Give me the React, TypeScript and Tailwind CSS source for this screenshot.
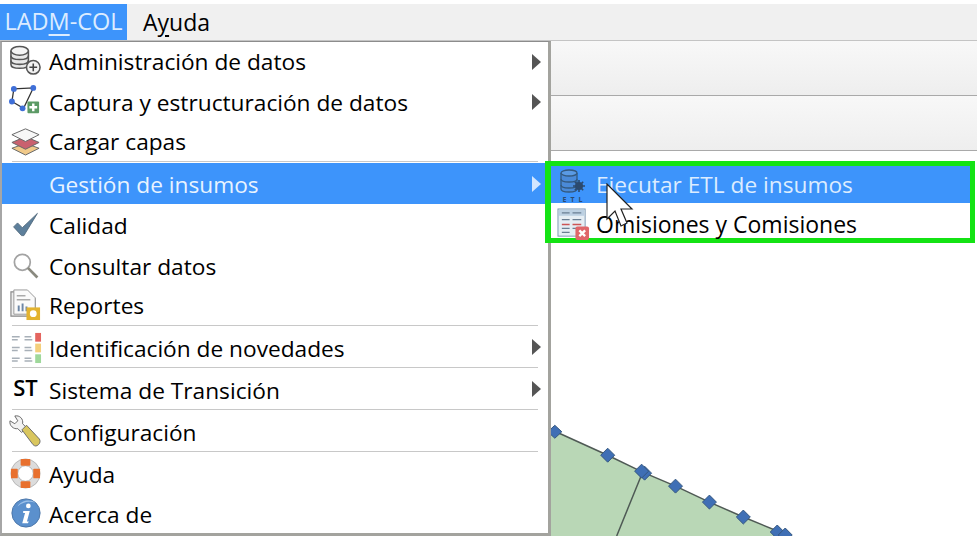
import React from 'react';

const DbAdd = () => (
  <svg width="33" height="33" viewBox="0 0 34 34" fill="none">
    <g stroke="#555" strokeWidth="1.600" fill="#fff">
      <path d="M2 7v14c0 2.500 4 4 9 4s9-1.500 9-4V7" fill="#e8e8e8" />
      <ellipse cx="11" cy="7" rx="9" ry="4.500" fill="#f4f4f4" />
      <path d="M2 12c0 2.500 4 4 9 4s9-1.500 9-4M2 17c0 2.500 4 4 9 4s9-1.500 9-4" fill="none" />
      <circle cx="25" cy="24" r="7" fill="#f2f2f2" />
    </g>
    <path d="M21 24h8M25 20v8" stroke="#444" strokeWidth="1.600" />
  </svg>
);

const PolyAdd = () => (
  <svg width="33" height="33" viewBox="0 0 34 34" fill="none">
    <path d="M5 4L25 3 15 24 3 17Z" stroke="#333" strokeWidth="1.300" />
    <g fill="#3f6fd8">
      <circle cx="5" cy="4" r="3" />
      <circle cx="25" cy="3" r="3" />
      <circle cx="14" cy="24" r="3" />
      <circle cx="3" cy="17" r="3" />
    </g>
    <rect x="19" y="17" width="12" height="12" rx="1" fill="#5c9a66" />
    <path d="M25 19v8M21 23h8" stroke="#fff" strokeWidth="2.500" />
  </svg>
);

const Layers = () => (
  <svg width="33" height="33" viewBox="0 0 34 34">
    <path d="M17 20l14 5-14 7-14-7z" fill="#f0c98a" stroke="#666" />
    <path d="M17 13l14 6-14 7-14-7z" fill="#c9616f" stroke="#666" />
    <path d="M17 5l14 6-14 7-14-7z" fill="#f7f7f7" stroke="#666" />
  </svg>
);

const Check = () => (
  <svg width="27" height="27" viewBox="0 0 34 34">
    <path d="M2 20l5-5 6 6L32 3 15 31h-3z" fill="#5d7f9b" stroke="#4a6275" strokeWidth="1" />
  </svg>
);

const Search = () => (
  <svg width="27" height="27" viewBox="0 0 34 34" fill="none">
    <circle cx="13" cy="13" r="10" stroke="#a3a3a3" strokeWidth="2.200" />
    <path d="M20 20l12 12" stroke="#8a8a80" strokeWidth="3.500" />
  </svg>
);

const Report = () => (
  <svg width="33" height="33" viewBox="0 0 34 34">
    <path d="M2 4h17l8 7v18H2z" fill="#eee" stroke="#888" strokeWidth="1.200" />
    <path d="M5 2h14l8 8v17H5z" fill="#fafafa" stroke="#999" />
    <path d="M8 8h9M8 12h14" stroke="#aaa" strokeWidth="1.500" />
    <path d="M10 24v-6M14 24v-8M18 24v-5" stroke="#6c86a6" strokeWidth="2" />
    <rect x="18" y="20" width="14" height="13" fill="#e3b32f" />
    <circle cx="25" cy="26.500" r="3.500" fill="#fff" />
  </svg>
);

const Novedades = () => (
  <svg width="33" height="33" viewBox="0 0 34 34">
    <path d="M3 6h8M3 9h6M16 6h7M16 9h8M3 17h8M3 20h6M16 17h7M16 20h8M3 28h8M3 31h6M16 28h7M16 31h8" stroke="#a8b0b8" strokeWidth="1.500" />
    <rect x="27" y="2" width="6" height="9" fill="#e4655f" />
    <rect x="27" y="13" width="6" height="9" fill="#f4cf7c" />
    <rect x="27" y="24" width="6" height="9" fill="#9fd89b" />
  </svg>
);

const Wrench = () => (
  <svg width="33" height="33" viewBox="0 0 34 34">
    <path d="M1 6l5 3 3-3-3-5c5-1 9 3 8 8l4 4-5 5-4-4C5 15 0 11 1 6z" fill="#f2f2f2" stroke="#666" />
    <path d="M14 14l5-5 14 15c1 2 1 4-1 6s-4 2-6 0z" fill="#d9c65e" stroke="#666" transform="translate(0 2) scale(0.95)" />
  </svg>
);

const Lifebuoy = () => (
  <svg width="33" height="33" viewBox="0 0 34 34" fill="none">
    <circle cx="17" cy="17" r="11.500" stroke="#dcdcdc" strokeWidth="7" />
    <circle cx="17" cy="17" r="15" stroke="#a9a9a9" strokeWidth="0.800" />
    <circle cx="17" cy="17" r="8" stroke="#a9a9a9" strokeWidth="0.800" />
    <g fill="#e8702e">
      <rect x="12" y="2" width="10" height="7" rx="1" />
      <rect x="12" y="25" width="10" height="7" rx="1" />
      <rect x="2" y="12" width="7" height="10" rx="1" />
      <rect x="25" y="12" width="7" height="10" rx="1" />
    </g>
  </svg>
);

const Info = () => (
  <svg width="32" height="32" viewBox="0 0 34 34">
    <circle cx="17" cy="17" r="15" fill="#5b90cd" stroke="#4a74a8" />
    <path d="M8 10c4-7 14-8 19-4-7-2-13-1-19 4z" fill="#9cc0e8" />
    <circle cx="19.500" cy="9.500" r="2.500" fill="#fff" />
    <path d="M14 15h7l-3 11h2l-1 2h-6l3-11h-2z" fill="#fff" />
  </svg>
);

const EtlIcon = () => (
  <span className="flex w-[30px] flex-col items-center">
    <svg width="30" height="28" viewBox="0 0 30 28" fill="none">
      <g stroke="#33597f" strokeWidth="1.300">
        <path d="M3 4v16c0 2 3 3 8 3s8-1 8-3V4" fill="#4a8ad8" />
        <ellipse cx="11" cy="4" rx="8" ry="3" fill="#5a9ae4" />
        <path d="M3 10c0 2 3 3 8 3s8-1 8-3M3 16c0 2 3 3 8 3s8-1 8-3" />
      </g>
      <circle cx="21" cy="17" r="4" fill="#2c4a6e" />
      <circle cx="21" cy="17" r="1.300" fill="#5a9ae4" />
      <path d="M21 11v12M15 17h12M16.800 12.800l8.400 8.400M25.200 12.800l-8.400 8.400" stroke="#2c4a6e" strokeWidth="1.600" />
    </svg>
    <span className="text-[7px] leading-[6px] font-bold tracking-[4px] pl-[4px] text-[#2c4a6e]">ETL</span>
  </span>
);

const OmissionIcon = () => (
  <svg width="33" height="33" viewBox="0 0 34 34">
    <rect x="1" y="1" width="28" height="28" fill="#e6eef4" stroke="#7f9ab3" />
    <rect x="2" y="2" width="26" height="6" fill="#bcd0e2" />
    <path d="M5 5h8M16 5h9M5 12h8M16 12h9" stroke="#6a7f94" strokeWidth="1.300" />
    <path d="M5 17h8M16 17h9" stroke="#cc5555" strokeWidth="1.600" />
    <path d="M5 21h8M16 21h6M5 25h8" stroke="#6a7f94" strokeWidth="1.300" />
    <rect x="19" y="19" width="14" height="14" rx="2" fill="#e0666a" />
    <path d="M23 23l6 6M29 23l-6 6" stroke="#fff" strokeWidth="2.400" />
  </svg>
);

const Arrow = ({ light }: { light?: boolean }) => (
  <span className={`absolute right-[7px] top-1/2 -translate-y-1/2 h-0 w-0 border-y-[8px] border-l-[9px] border-y-transparent ${light ? 'border-l-[#d3e6ff]' : 'border-l-[#555555]'}`} />
);

const Sep = () => (
  <div className="ml-[10px] mr-[10px] h-[2px] bg-[#c8c8c8] border-b border-white" />
);

type RowProps = {
  label: string;
  icon?: React.ReactNode;
  arrow?: boolean;
  active?: boolean;
  size: string;
};

const Row = ({ label, icon, arrow, active, size }: RowProps) => (
  <div className={`relative flex items-center ${size} ${active ? 'bg-[#3d94fb] text-[#e8f3ff]' : 'text-black'}`}>
    <span className="flex w-[47px] shrink-0 justify-center pb-[4px]">{icon}</span>
    <span>{label}</span>
    {arrow && <Arrow light={active} />}
  </div>
);

const Canvas = () => (
  <svg className="absolute inset-0 h-full w-full" viewBox="0 0 977 386" fill="none">
    <path d="M500 240L555 281 608 305 643 322 676 336 710 352 744 367 778 381 800 392H500Z" fill="#b9d7b6" />
    <path d="M548 277L555 281 608 305 643 322 676 336 710 352 744 367 778 381 795 390M643 322L617 386" stroke="#4f5a55" strokeWidth="1.500" />
    <g fill="#3f6fb5" stroke="#35577f">
      <path d="M555 275l7 6.500-7 6.500-7-6.500z" />
      <path d="M608 298l7 7-7 7-7-7z" />
      <path d="M645 316l7 7-7 7-7-7z" />
      <path d="M642 314l7 7-7 7-7-7z" />
      <path d="M676 329l7 7-7 7-7-7z" />
      <path d="M710 345l7 7-7 7-7-7z" />
      <path d="M744 360l7 7-7 7-7-7z" />
      <path d="M778 375l7 7-7 7-7-7z" />
      <path d="M786 378l7 7-7 7-7-7z" />
    </g>
  </svg>
);

export default function App() {
  return (
    <div className="relative flex h-[536px] w-[977px] flex-col overflow-hidden bg-white pt-[4px] font-['Open_Sans','Noto_Sans',sans-serif] text-[22.7px]">
      <div className="flex h-[37px] shrink-0 items-stretch border-b border-[#c4c4c4] bg-[#f0f0f0] leading-none">
        <div className="flex w-[127px] items-center justify-center bg-[#3d94fb] text-[#dcecff] text-[23.500px]">
          <span>LAD<span className="underline underline-offset-4">M</span>-COL</span>
        </div>
        <div className="flex items-center pl-[16px] text-[23px] text-black">
          <span>A<span className="underline underline-offset-4">y</span>uda</span>
        </div>
      </div>
      <div className="h-[55px] shrink-0 border-b border-[#a9a9a9] bg-gradient-to-b from-[#f8f8f8] to-[#eeeeee]" />
      <div className="h-[55px] shrink-0 border-b border-[#a9a9a9] bg-gradient-to-b from-[#f8f8f8] to-[#eeeeee]" />
      <div className="relative flex-1 bg-white">
        <Canvas />
      </div>

      <div className="absolute left-0 top-[41px] w-[551px] border-l-2 border-t border-r-[3px] border-b-[3px] border-l-[#a6a6a6] border-t-[#8c8c8c] border-r-[#a3a39e] border-b-[#a3a39e] bg-white">
        <Row label="Administración de datos" icon={<DbAdd />} arrow size="h-[40px]" />
        <Row label="Captura y estructuración de datos" icon={<PolyAdd />} arrow size="h-[40px] pt-[2px]" />
        <Row label="Cargar capas" icon={<Layers />} size="h-[39px] pt-[2px]" />
        <Sep />
        <Row label="Gestión de insumos" active arrow size="h-[41px] pt-[3px]" />
        <Row label="Calidad" icon={<Check />} size="h-[42px] pt-[3px]" />
        <Row label="Consultar datos" icon={<Search />} size="h-[40px] pt-[2px]" />
        <Row label="Reportes" icon={<Report />} size="h-[39px] pt-[2px]" />
        <Sep />
        <Row label="Identificación de novedades" icon={<Novedades />} arrow size="h-[40px] pt-[4px]" />
        <Sep />
        <Row label="Sistema de Transición" icon={<span className="pb-[5px] text-[22px] font-semibold leading-none">ST</span>} arrow size="h-[40px] pt-[4px]" />
        <Sep />
        <Row label="Configuración" icon={<Wrench />} size="h-[40px] pt-[4px]" />
        <Sep />
        <Row label="Ayuda" icon={<Lifebuoy />} size="h-[40px] pt-[4px]" />
        <Row label="Acerca de" icon={<Info />} size="h-[40px] pt-[4px]" />
      </div>

      <div className="absolute left-[545px] top-[161px] w-[430px] border-[5px] border-l-[6px] border-[#14e314] bg-white">
        <div className="flex h-[37px] items-center pt-[2px] bg-[#3d94fb] text-[#dcecff]">
          <span className="flex w-[45px] shrink-0 justify-center pr-[2px]"><EtlIcon /></span>
          <span>Ejecutar ETL de insumos</span>
        </div>
        <div className="flex h-[35px] items-center pt-[7px] text-[23px] text-black">
          <span className="flex w-[45px] shrink-0 justify-center">
            <OmissionIcon />
          </span>
          <span>Omisiones y Comisiones</span>
        </div>
      </div>

      <svg className="absolute left-[606px] top-[183px]" width="28" height="46" viewBox="0 0 28 46">
        <path d="M1 1v35l8-8 6 15 6-3-6-14h11z" fill="#fff" stroke="#222" strokeWidth="1.200" />
      </svg>
    </div>
  );
}
